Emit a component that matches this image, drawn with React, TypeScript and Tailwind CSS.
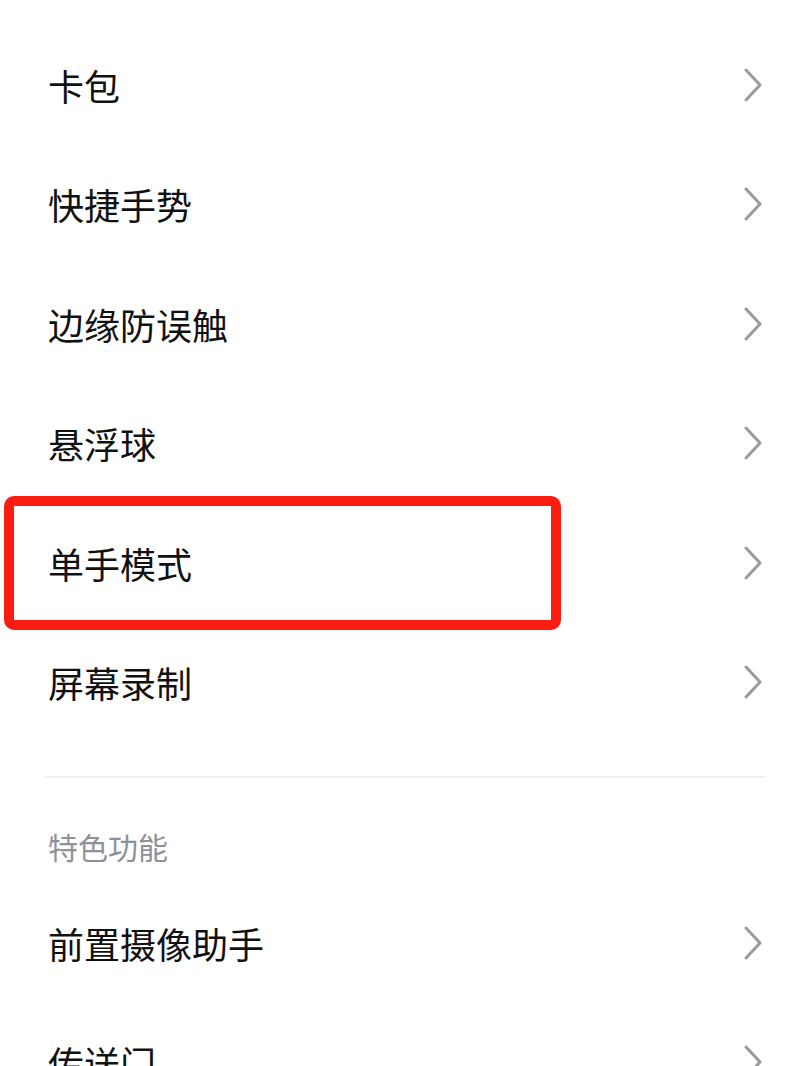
import React from "react";

const font = { fontFamily: '"Noto Sans CJK SC", "Noto Sans", sans-serif' };

function Chevron() {
  return (
    <svg width="20" height="34" viewBox="0 0 20 34" fill="none" className="shrink-0">
      <path d="M3 2 L17 17 L3 32" stroke="#9a9a9a" strokeWidth="3" strokeLinecap="round" strokeLinejoin="round" />
    </svg>
  );
}

function Row({ label, highlight }: { label: string; highlight?: boolean }) {
  return (
    <div className="relative flex h-[119.5px] items-center justify-between pl-[48px] pr-[37px]">
      <span className="text-[36px] leading-none text-[#111111]">{label}</span>
      <Chevron />
      {highlight && (
        <div className="pointer-events-none absolute left-[4px] top-[-7px] h-[134px] w-[557px] rounded-[10px] border-[10px] border-[#fc1d12]" />
      )}
    </div>
  );
}

export default function App() {
  const top = ["卡包", "快捷手势", "边缘防误触", "悬浮球", "单手模式", "屏幕录制"];
  return (
    <div className="h-[1066px] w-[800px] overflow-hidden bg-white" style={font}>
      <div className="pt-[25px]">
        {top.map((t) => (
          <Row key={t} label={t} highlight={t === "单手模式"} />
        ))}
      </div>
      <div className="ml-[45px] mr-[35px] mt-[34px] h-[2px] bg-[#efeff1]" />
      <div className="flex h-[105px] items-center pl-[48px] pt-[30px]">
        <span className="text-[30px] leading-none text-[#8e9199]">特色功能</span>
      </div>
      <Row label="前置摄像助手" />
      <Row label="传送门" />
    </div>
  );
}
